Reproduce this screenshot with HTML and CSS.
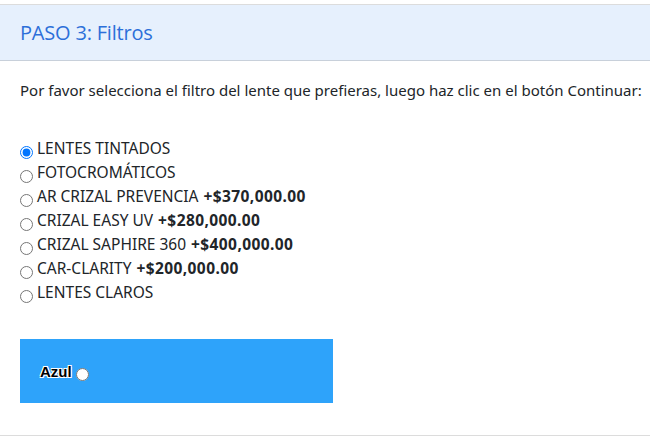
FILE: index.html
```html
<!DOCTYPE html>
<html lang="es">
<head>
<meta charset="utf-8">
<link rel="stylesheet" href="styles.css">
</head>
<body>
<div class="panel">
  <div class="panel-head"><h2>PASO 3: Filtros</h2></div>
  <div class="panel-body">
    <p class="intro">Por favor selecciona el filtro del lente que prefieras, luego haz clic en el botón Continuar:</p>
    <ul class="options">
      <li><label><input type="radio" name="f" checked> LENTES TINTADOS</label></li>
      <li><label><input type="radio" name="f"> FOTOCROMÁTICOS</label></li>
      <li><label><input type="radio" name="f"> AR CRIZAL PREVENCIA <b>+$370,000.00</b></label></li>
      <li><label><input type="radio" name="f"> CRIZAL EASY UV <b>+$280,000.00</b></label></li>
      <li><label><input type="radio" name="f"> CRIZAL SAPHIRE 360 <b>+$400,000.00</b></label></li>
      <li><label><input type="radio" name="f"> CAR-CLARITY <b>+$200,000.00</b></label></li>
      <li><label><input type="radio" name="f"> LENTES CLAROS</label></li>
    </ul>
    <div class="color-box">
      <label class="color-opt">Azul <input type="radio" name="c"></label>
    </div>
  </div>
  <div class="panel-foot"></div>
</div>
</body>
</html>
```
FILE: styles.css
```css
html, body {
  margin: 0;
  padding: 0;
  background: #fff;
}
body {
  font-family: "Noto Sans", "Open Sans", sans-serif;
  color: #212529;
}
.panel {
  margin-top: 4px;
  border-top: 1px solid #dcdcdc;
}
.panel-head {
  background: #e6f0fd;
  border-bottom: 1px solid #c8d0da;
  height: 55px;
  display: flex;
  align-items: center;
  padding: 0 20px;
}
.panel-head h2 {
  margin: 0;
  font-family: "Open Sans", sans-serif;
  font-weight: 400;
  font-size: 20px;
  color: #2c6fd9;
  letter-spacing: -0.2px;
}
.panel-body {
  padding: 18px 20px 32px;
}
.intro {
  margin: 0 0 35px;
  font-size: 15px;
  line-height: 22px;
  white-space: nowrap;
}
.options {
  list-style: none;
  margin: 0 0 35px;
  padding: 0;
}
.options li {
  font-size: 15.5px;
  line-height: 24px;
  height: 24px;
}
.options label {
  display: inline-flex;
  align-items: baseline;
}
.options input {
  margin: 0 4px 0 0;
  width: 13px;
  height: 13px;
  position: relative;
  top: 5px;
}
.options b {
  margin-left: 5px;
  font-weight: 700;
  letter-spacing: 0.4px;
}
.color-box {
  background: #2ea3fa;
  width: 313px;
  height: 64px;
  display: flex;
  align-items: center;
  padding-left: 20px;
  box-sizing: border-box;
}
.color-opt {
  font-family: "Liberation Sans", Arial, sans-serif;
  font-weight: 700;
  font-size: 15px;
  color: #000;
  text-shadow: 1px 1px 0 #fff, -1px -1px 0 #fff, 1px -1px 0 #fff, -1px 1px 0 #fff;
  display: inline-flex;
  align-items: center;
}
.color-opt input {
  margin: 7px 0 0 4px;
  width: 13px;
  height: 13px;
}
.panel-foot {
  border-top: 1px solid #dcdcdc;
}
```
